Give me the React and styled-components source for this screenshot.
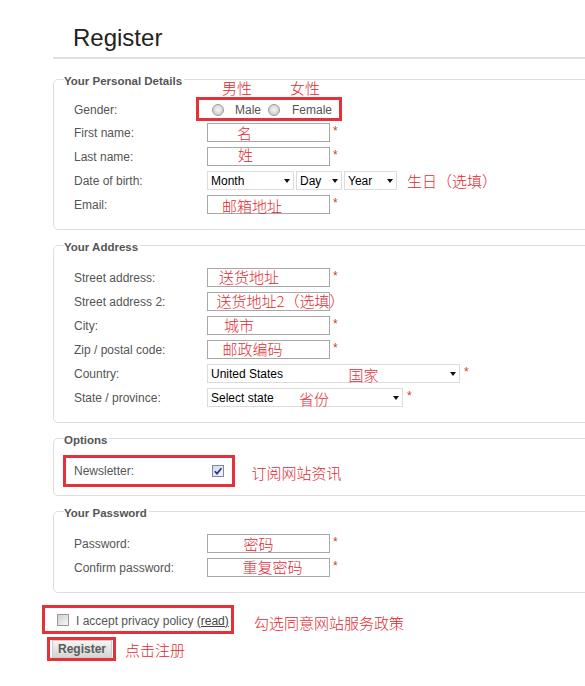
import React from 'react'
import styled, { createGlobalStyle } from 'styled-components'

const BOX_RED = '#e5323a'
const NOTE_RED = '#e0292f'
const SANS = '"Liberation Sans", Arial, sans-serif'
const CJK = '"Noto Sans CJK SC", "Noto Sans", sans-serif'

const GlobalStyle = createGlobalStyle`
  html, body {
    margin: 0;
    padding: 0;
    background: #fff;
  }
  body {
    overflow-x: hidden;
    font-family: ${SANS};
    font-size: 12px;
    color: #555;
  }
`

export default function App() {
  return (
    <Page>
      <GlobalStyle />
      <Header>
        <Title>Register</Title>
      </Header>
      <Form onSubmit={(e) => e.preventDefault()}>
        <Section $pad="9px 10px 12px">
          <Legend>Your Personal Details</Legend>
          <Row>
            <Label $dy={1}>Gender:</Label>
            <RadioBox>
              <Note $x={23} $y={-20}>男性</Note>
              <Note $x={91} $y={-20}>女性</Note>
              <Radio />
              <OptionText $gap={11}>Male</OptionText>
              <Radio $gap={7} />
              <OptionText $gap={12}>Female</OptionText>
            </RadioBox>
          </Row>
          <Row>
            <Label>First name:</Label>
            <TextField note="名" x={30} y={1.5} />
          </Row>
          <Row>
            <Label>Last name:</Label>
            <TextField note="姓" x={31} y={0} />
          </Row>
          <Row>
            <Label>Date of birth:</Label>
            <Group>
              <Dropdown width={87} value="Month" />
              <Dropdown width={46} value="Day" />
              <Dropdown width={53} value="Year" />
            </Group>
            <SideNote $gap={10}>生日（选填）</SideNote>
          </Row>
          <Row>
            <Label>Email:</Label>
            <TextField note="邮箱地址" x={15} y={3} />
          </Row>
        </Section>

        <Section $pad="12px 10px 12px">
          <Legend>Your Address</Legend>
          <Row>
            <Label>Street address:</Label>
            <TextField note="送货地址" x={12} y={1} />
          </Row>
          <Row>
            <Label>Street address 2:</Label>
            <TextField note="送货地址2（选填）" x={9.5} y={0.5} star={false} />
          </Row>
          <Row>
            <Label>City:</Label>
            <TextField note="城市" x={17} y={0.5} />
          </Row>
          <Row>
            <Label>Zip / postal code:</Label>
            <TextField note="邮政编码" x={15.5} y={0.5} />
          </Row>
          <Row>
            <Label>Country:</Label>
            <Field>
              <Dropdown width={253} value="United States" />
              <Note $x={141.5} $y={2.5}>国家</Note>
              <Star $gap={4}>*</Star>
            </Field>
          </Row>
          <Row>
            <Label>State / province:</Label>
            <Field>
              <Dropdown width={196} value="Select state" />
              <Note $x={92} $y={2.5}>省份</Note>
              <Star $gap={4}>*</Star>
            </Field>
          </Row>
        </Section>

        <Section $pad="8px 10px 8px">
          <Legend>Options</Legend>
          <Line>
            <MarkBox $w={172} $h={32} $ml={-1} $pl={8}>
              <Label>Newsletter:</Label>
              <CheckBox checked gap={5} />
            </MarkBox>
            <SideNote $gap={16.5} $dy={2.5}>订阅网站资讯</SideNote>
          </Line>
        </Section>

        <Section $pad="12px 10px 12px">
          <Legend>Your Password</Legend>
          <Row>
            <Label>Password:</Label>
            <TextField type="password" note="密码" x={36.5} y={1.5} />
          </Row>
          <Row>
            <Label>Confirm password:</Label>
            <TextField type="password" note="重复密码" x={35.5} y={1} />
          </Row>
        </Section>

        <Footer>
          <Line>
            <MarkBox $w={192} $h={29} $ml={0} $pl={12}>
              <CheckBox />
              <Accept>
                I accept privacy policy <ReadLink href="#read">(read)</ReadLink>
              </Accept>
            </MarkBox>
            <SideNote $gap={20} $dy={3.5}>勾选同意网站服务政策</SideNote>
          </Line>
          <Line $top={3}>
            <MarkBox $w={69} $h={24} $ml={5} $pl={2}>
              <Button type="submit">Register</Button>
            </MarkBox>
            <SideNote $gap={9} $dy={1.3}>点击注册</SideNote>
          </Line>
        </Footer>
      </Form>
    </Page>
  )
}

function TextField({ note, x, y, star = true, type = 'text' }) {
  return (
    <Field>
      <Input type={type} />
      {note && <Note $x={x} $y={y}>{note}</Note>}
      {star && <Star $gap={3}>*</Star>}
    </Field>
  )
}

function Dropdown({ width, value }) {
  return (
    <SelectBox $w={width}>
      <Select defaultValue={value}>
        <option>{value}</option>
      </Select>
      <Caret />
    </SelectBox>
  )
}

function CheckBox({ checked, gap = 0 }) {
  return (
    <Check $checked={checked} $gap={gap}>
      {checked && (
        <svg width="10" height="10" viewBox="0 0 10 10">
          <path d="M1.8 5.2 L4 7.6 L8.4 2.2" fill="none" stroke="#243886" strokeWidth="1.7" />
        </svg>
      )}
    </Check>
  )
}

const Page = styled.div`
  padding: 0 0 30px 42px;
  overflow: hidden;
`
const Header = styled.div`
  margin-left: 11px;
  padding: 24px 0 5px 20px;
  border-bottom: 2px solid #e1e1e1;
`
const Title = styled.h1`
  margin: 0;
  font: 400 24px/28px ${SANS};
  color: #222;
`
const Form = styled.form`
  padding-top: 11.5px;
`
const Section = styled.fieldset`
  margin: 0 -60px 7px 11px;
  padding: ${({ $pad }) => $pad};
  border: 1px solid #dedede;
  border-radius: 5px;
  min-width: 0;
`
const Legend = styled.legend`
  padding: 4px 2px 0 0;
  font: 700 11.5px/13px ${SANS};
  color: #555;
`
const Row = styled.div`
  display: flex;
  align-items: center;
  height: 24px;
  padding-left: 10px;
`
const Line = styled.div`
  display: flex;
  align-items: center;
  margin-top: ${({ $top }) => $top || 0}px;
`
const Label = styled.label`
  flex: none;
  width: 133px;
  margin-top: ${({ $dy }) => ($dy || 0) * 2}px;
  color: #555;
`
const Field = styled.span`
  position: relative;
  display: inline-flex;
  align-items: flex-start;
`
const Group = styled.span`
  display: inline-flex;
  gap: 2px;
`
const Input = styled.input`
  box-sizing: border-box;
  width: 123px;
  height: 19px;
  margin: 0;
  padding: 0 3px;
  border: 1px solid #a8a8a8;
  border-radius: 0;
  background: #fff;
  font: 12px ${SANS};
`
const Star = styled.span`
  margin: 2px 0 0 ${({ $gap }) => $gap}px;
  color: #d43a3a;
  font: 12px/12px ${SANS};
`
const Note = styled.span`
  position: absolute;
  left: ${({ $x }) => $x}px;
  top: ${({ $y }) => $y}px;
  font: 300 15px/16px ${CJK};
  color: ${NOTE_RED};
  white-space: nowrap;
  pointer-events: none;
`
const SideNote = styled.span`
  margin-left: ${({ $gap }) => $gap}px;
  margin-top: ${({ $dy }) => ($dy || 0) * 2}px;
  font: 300 15px/16px ${CJK};
  color: ${NOTE_RED};
  white-space: nowrap;
`
const RadioBox = styled.div`
  position: relative;
  box-sizing: border-box;
  display: flex;
  align-items: center;
  width: 146px;
  height: 24px;
  margin-left: -11px;
  padding-left: 13px;
  border: 3px solid ${BOX_RED};
`
const Radio = styled.span`
  flex: none;
  box-sizing: border-box;
  width: 12px;
  height: 12px;
  margin: 3px 0 0 ${({ $gap }) => $gap || 0}px;
  border: 1px solid #9c9c9c;
  border-radius: 50%;
  background: radial-gradient(circle at 50% 45%, #f6f6f6 0, #d6d6d6 60%, #b8b8b8 100%);
`
const OptionText = styled.span`
  margin: 2px 0 0 ${({ $gap }) => $gap}px;
  color: #555;
`
const SelectBox = styled.span`
  position: relative;
  display: inline-block;
  width: ${({ $w }) => $w}px;
  height: 19px;
`
const Select = styled.select`
  appearance: none;
  box-sizing: border-box;
  width: 100%;
  height: 100%;
  margin: 0;
  padding: 0 14px 0 3px;
  border: 1px solid #dcdcdc;
  border-radius: 0;
  background: #fff;
  color: #000;
  font: 12px ${SANS};
  outline: none;
`
const Caret = styled.span`
  position: absolute;
  right: 4px;
  top: 8px;
  border-left: 3.5px solid transparent;
  border-right: 3.5px solid transparent;
  border-top: 4px solid #111;
  pointer-events: none;
`
const MarkBox = styled.div`
  flex: none;
  box-sizing: border-box;
  display: flex;
  align-items: center;
  width: ${({ $w }) => $w}px;
  height: ${({ $h }) => $h}px;
  margin-left: ${({ $ml }) => $ml}px;
  padding-left: ${({ $pl }) => $pl}px;
  border: 3px solid ${BOX_RED};
`
const Check = styled.span`
  flex: none;
  box-sizing: border-box;
  display: inline-flex;
  align-items: center;
  justify-content: center;
  width: 12px;
  height: 12px;
  margin: 1px 0 0 ${({ $gap }) => $gap}px;
  border: 1px solid ${({ $checked }) => ($checked ? '#7d89a8' : '#9a9a9a')};
  background: ${({ $checked }) =>
    $checked ? 'linear-gradient(135deg, #d3d9e8, #f3f5f9)' : 'linear-gradient(135deg, #cfcfcf, #f7f7f7)'};
`
const Footer = styled.div`
  padding-top: 5.5px;
`
const Accept = styled.span`
  margin: 2px 0 0 7px;
  color: #555;
  white-space: nowrap;
`
const ReadLink = styled.a`
  color: #444;
  text-decoration: underline;
`
const Button = styled.button`
  box-sizing: border-box;
  width: 60px;
  height: 18px;
  margin: 0;
  padding: 0;
  border: 1px solid #cdcdcd;
  border-radius: 0;
  background: linear-gradient(#f4f4f4, #d5d5d5);
  font: 700 12px ${SANS};
  color: #5a5a5a;
`
